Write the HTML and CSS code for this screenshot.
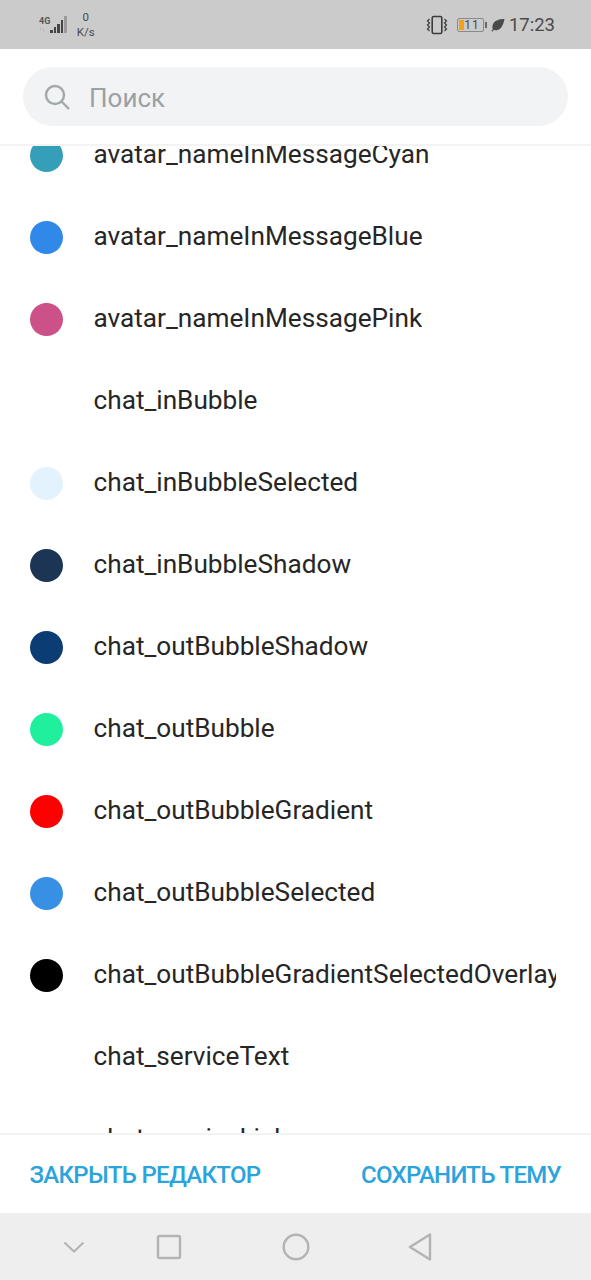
FILE: index.html
```html
<!DOCTYPE html>
<html lang="ru">
<head>
  <meta charset="UTF-8" />
  <meta name="viewport" content="width=device-width, initial-scale=1.0"/>
  <title>Редактор темы</title>
  <link rel="stylesheet" href="styles.css">
</head>
<body>
  <div class="app">
    <!-- Статус-бар -->
    <div class="status-bar">
      <div class="status-left">
        <div class="signal">
          <div class="signal-labels">
            <span class="net">4G</span>
            <span class="updown">↑↓</span>
          </div>
          <div class="bars">
            <i class="bar b1"></i><i class="bar b2"></i><i class="bar b3"></i><i class="bar b4"></i><i class="bar b5"></i>
          </div>
        </div>
        <div class="speed"><span>0</span><span>K/s</span></div>
      </div>
      <div class="status-right">
        <svg class="vibrate" width="22" height="20" viewBox="0 0 22 20" fill="none" stroke="#3c3c3c">
          <rect x="6.2" y="1.5" width="9.6" height="17" rx="1.5" stroke-width="1.6"/>
          <path d="M3.5 4l-2 2 2 2-2 2 2 2-2 2 2 2M18.5 4l2 2-2 2 2 2-2 2 2 2-2 2" stroke-width="1.2"/>
        </svg>
        <div class="battery">
          <div class="battery-body">
            <i class="battery-level"></i>
            <span class="battery-num">11</span>
          </div>
          <i class="battery-tip"></i>
        </div>
        <svg class="leaf" width="14" height="14" viewBox="0 0 14 14">
          <path d="M13.5 1C8 1 2.5 2.5 1.5 8c-.3 1.500 0 2.500.4 3L.5 13l.8.700 1.600-1.900c1 .6 2.500.7 4 .2 4-1.400 5.500-6 6.600-11z" fill="#4a4a4a"/>
        </svg>
        <span class="clock">17:23</span>
      </div>
    </div>

    <!-- Поиск -->
    <div class="search-wrap">
      <div class="search">
        <svg class="search-icon" width="28" height="28" viewBox="0 0 28 28" fill="none" stroke="#a3a8ab" stroke-width="2.400">
          <circle cx="12" cy="12" r="9"/>
          <path d="M18.500 18.500l7.500 7.500"/>
        </svg>
        <span class="search-text">Поиск</span>
      </div>
    </div>

    <!-- Список цветов -->
    <div class="list">
      <div class="list-inner">
        <div class="row"><span class="dot cyan"></span><span class="name">avatar_nameInMessageCyan</span></div>
        <div class="row"><span class="dot blue"></span><span class="name">avatar_nameInMessageBlue</span></div>
        <div class="row"><span class="dot pink"></span><span class="name">avatar_nameInMessagePink</span></div>
        <div class="row"><span class="dot white"></span><span class="name">chat_inBubble</span></div>
        <div class="row"><span class="dot in-selected"></span><span class="name">chat_inBubbleSelected</span></div>
        <div class="row"><span class="dot in-shadow"></span><span class="name">chat_inBubbleShadow</span></div>
        <div class="row"><span class="dot out-shadow"></span><span class="name">chat_outBubbleShadow</span></div>
        <div class="row"><span class="dot out"></span><span class="name">chat_outBubble</span></div>
        <div class="row"><span class="dot out-gradient"></span><span class="name">chat_outBubbleGradient</span></div>
        <div class="row"><span class="dot out-selected"></span><span class="name">chat_outBubbleSelected</span></div>
        <div class="row"><span class="dot overlay"></span><span class="name">chat_outBubbleGradientSelectedOverlay</span></div>
        <div class="row"><span class="dot white"></span><span class="name">chat_serviceText</span></div>
        <div class="row"><span class="dot white"></span><span class="name">chat_serviceLink</span></div>
      </div>
    </div>

    <!-- Кнопки -->
    <div class="actions">
      <span class="action">Закрыть редактор</span>
      <span class="action">Сохранить тему</span>
    </div>

    <!-- Навигация -->
    <div class="nav-bar">
      <svg class="nav-chevron" width="24" height="14" viewBox="0 0 24 14" fill="none" stroke="#b3b3b3" stroke-width="2">
        <path d="M2.500 2.500L12 11.500l9.500-9"/>
      </svg>
      <svg class="nav-square" width="26" height="26" viewBox="0 0 26 26" fill="none" stroke="#b3b3b3" stroke-width="2.400">
        <rect x="2" y="2" width="22" height="22" rx="1.500"/>
      </svg>
      <svg class="nav-circle" width="28" height="28" viewBox="0 0 28 28" fill="none" stroke="#b3b3b3" stroke-width="2.400">
        <circle cx="14" cy="14" r="12.300"/>
      </svg>
      <svg class="nav-back" width="24" height="28" viewBox="0 0 24 28" fill="none" stroke="#b3b3b3" stroke-width="2.400" stroke-linejoin="round">
        <path d="M22 1.500v25L2 14z"/>
      </svg>
    </div>
  </div>
</body>
</html>
```

FILE: styles.css
```css
* {
  box-sizing: border-box;
}
body {
  margin: 0;
  background: #fff;
  font-family: Roboto, "Noto Sans", sans-serif;
}
.app {
  display: flex;
  flex-direction: column;
  width: 591px;
  height: 1280px;
  overflow: hidden;
}

/* Статус-бар */
.status-bar {
  display: flex;
  justify-content: space-between;
  align-items: center;
  flex: none;
  height: 49px;
  padding: 0 36px 0 39px;
  background: #cbcbcb;
  color: #4a4a4a;
}
.status-left {
  display: flex;
  align-items: center;
  gap: 10px;
}
.signal {
  display: flex;
  align-items: flex-end;
  gap: 0;
}
.signal-labels {
  display: flex;
  flex-direction: column;
  line-height: 8px;
}
.net {
  font-size: 9px;
  font-weight: 700;
  color: #555;
}
.updown {
  font-size: 6px;
  color: #999;
}
.bars {
  display: flex;
  align-items: flex-end;
  gap: 1px;
  height: 17px;
}
.bar {
  display: block;
  width: 2.500px;
  background: #444;
}
.b1 { height: 3px; }
.b2 { height: 6px; }
.b3 { height: 9px; }
.b4 { height: 13px; }
.b5 { height: 17px; background: #9a9a9a; }
.speed {
  display: flex;
  flex-direction: column;
  align-items: center;
  font-size: 11.500px;
  line-height: 15px;
  margin-top: 1px;
}
.status-right {
  display: flex;
  align-items: center;
  gap: 4px;
}
.vibrate {
  margin-right: 5px;
}
.battery {
  display: flex;
  align-items: center;
  gap: 1px;
}
.battery-body {
  position: relative;
  width: 27px;
  height: 14px;
  border: 1px solid #8a8a8a;
  border-radius: 2px;
  text-align: center;
  font-size: 12px;
  line-height: 12px;
  padding-left: 3px;
  letter-spacing: 1px;
}
.battery-level {
  position: absolute;
  top: 1px;
  left: 1px;
  bottom: 1px;
  width: 5px;
  background: #f5a018;
}
.battery-tip {
  display: block;
  width: 2px;
  height: 6px;
  background: #666;
}
.clock {
  font-size: 18.500px;
  margin-left: 0;
}

/* Поиск */
.search-wrap {
  flex: none;
  height: 97px;
  padding: 18px 23px 0;
  border-bottom: 2px solid #f3f3f3;
}
.search {
  display: flex;
  align-items: center;
  height: 59px;
  padding-left: 20px;
  border-radius: 30px;
  background: #f1f3f5;
}
.search-icon {
  flex: none;
}
.search-text {
  margin: 2px 0 0 18px;
  font-size: 26px;
  color: #9aa0a4;
}

/* Список */
.list {
  flex: 1;
  min-height: 0;
  overflow: hidden;
}
.list-inner {
  margin-top: -33px;
}
.row {
  display: flex;
  align-items: center;
  height: 82px;
  padding: 0 35px 0 30px;
}
.dot {
  flex: none;
  width: 33px;
  height: 33px;
  margin-top: 2px;
  border-radius: 50%;
}
.name {
  margin-left: 30.500px;
  overflow: hidden;
  white-space: nowrap;
  font-size: 26.200px;
  color: #262626;
}
.cyan { background: #359eb9; }
.blue { background: #3088e8; }
.pink { background: #cc5189; }
.white { background: #fff; }
.in-selected { background: #e4f2fe; }
.in-shadow { background: #1c3555; }
.out-shadow { background: #0c3c74; }
.out { background: #20ef9e; }
.out-gradient { background: #ff0000; }
.out-selected { background: #3890e4; }
.overlay { background: #000; }

/* Кнопки */
.actions {
  display: flex;
  justify-content: space-between;
  align-items: center;
  flex: none;
  height: 80px;
  padding: 2px 30px 0 29.500px;
  border-top: 2px solid #f3f3f3;
  background: #fff;
}
.action {
  font-size: 24px;
  font-weight: 500;
  letter-spacing: -0.700px;
  color: #2ba3dc;
  text-transform: uppercase;
}

/* Навигация */
.nav-bar {
  display: flex;
  align-items: center;
  flex: none;
  height: 67px;
  padding-left: 62px;
  background: #eeeeee;
}
.nav-chevron { margin-right: 70px; }
.nav-square { margin-right: 100px; }
.nav-circle { margin-right: 98px; }
```
